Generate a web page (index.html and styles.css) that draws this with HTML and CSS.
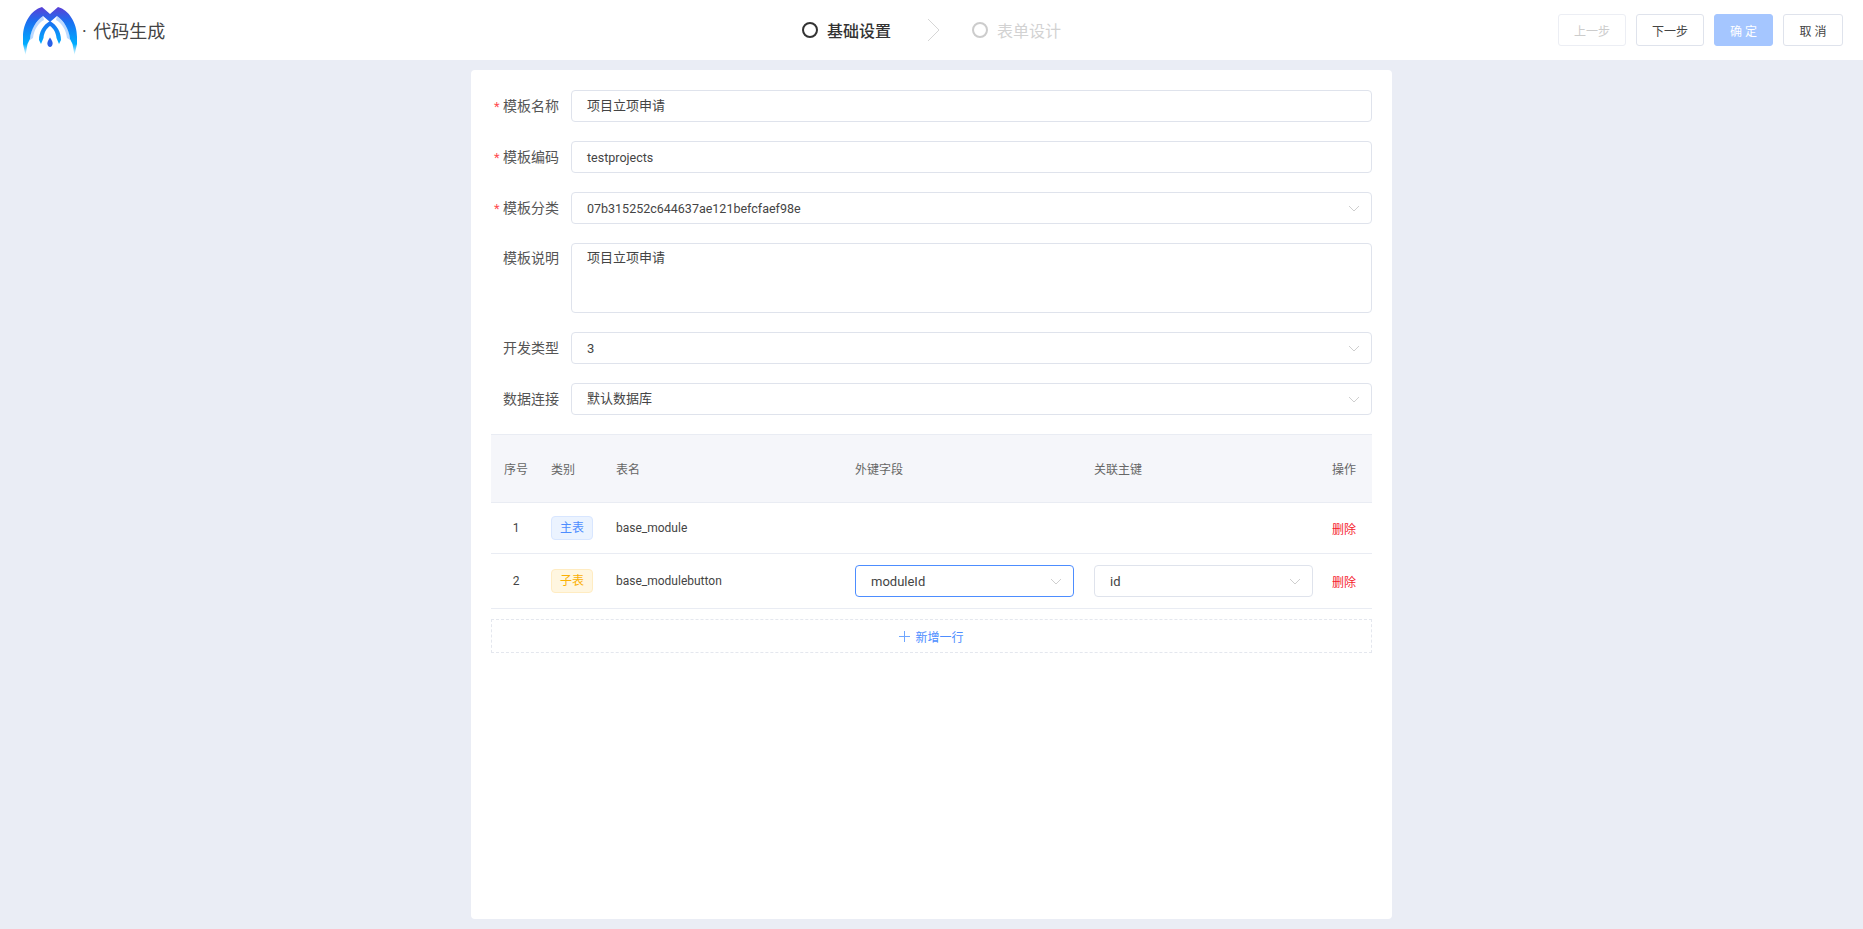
FILE: index.html
```html
<!DOCTYPE html>
<html lang="zh-CN">
<head>
    <meta charset="UTF-8">
    <title>代码生成</title>
    <link rel="stylesheet" href="styles.css">
</head>
<body>
    <!-- Top bar -->
    <header class="topbar">
        <div class="brand">
            <svg class="logo" viewBox="20 0 60 60" width="60" height="60">
                <defs>
                    <linearGradient id="logo-fill" gradientUnits="userSpaceOnUse" x1="0" y1="7" x2="0" y2="56">
                        <stop offset="0" stop-color="#5b3fd6"/>
                        <stop offset="0.3" stop-color="#1b6ff0"/>
                        <stop offset="0.76" stop-color="#00aeff"/>
                        <stop offset="0.88" stop-color="#8adcff"/>
                        <stop offset="1" stop-color="#ffffff"/>
                    </linearGradient>
                </defs>
                <path class="logo-halo" d="M43 16 C36 21 30 30 30 40 L33 38 C34 30 38 23 44 20 Z"/>
                <path class="logo-halo" d="M57 16 C64 21 70 30 70 40 L67 38 C66 30 62 23 56 20 Z"/>
                <path fill="url(#logo-fill)" d="M42 7 C31 10 23 23 23 37 V44 L25.500 55 L27.500 44 L30 39 C31 29 36 21 43 16 L50 22 L57 16 C64 21 69 29 70 39 L72.500 44 L74.500 55 L77 44 V37 C77 23 69 10 58 7 L50 14 Z"/>
                <path fill="url(#logo-fill)" d="M50 21 C43 25 39 32 39 40 L41 44 L43.500 38 C44 32 47 28 50 26 C53 28 56 32 56.500 38 L59 44 L61 40 C61 32 57 25 50 21 Z"/>
                <path fill="#2a5fe6" d="M50 37.500 C52 40.500 52.600 42 52.600 43.500 C52.600 45.500 51.400 47 50 47 C48.600 47 47.400 45.500 47.400 43.500 C47.400 42 48 40.500 50 37.500 Z"/>
            </svg>
            <span class="brand-title">· 代码生成</span>
        </div>

        <div class="steps">
            <div class="step step-active"><i class="step-dot"></i>基础设置</div>
            <svg class="step-arrow" viewBox="0 0 13 24" width="13" height="24">
                <path d="M1 1 L12 12 L1 23" fill="none" stroke="#d6d6d6"/>
            </svg>
            <div class="step"><i class="step-dot"></i>表单设计</div>
        </div>

        <div class="actions">
            <div class="btn btn-wide btn-disabled">上一步</div>
            <div class="btn btn-wide">下一步</div>
            <div class="btn btn-primary">确 定</div>
            <div class="btn">取 消</div>
        </div>
    </header>

    <main class="content">
        <div class="card">
            <div class="form-row">
                <label class="form-label"><span class="req">*</span>模板名称</label>
                <div class="field">项目立项申请</div>
            </div>
            <div class="form-row">
                <label class="form-label"><span class="req">*</span>模板编码</label>
                <div class="field field-latin field-small">testprojects</div>
            </div>
            <div class="form-row">
                <label class="form-label"><span class="req">*</span>模板分类</label>
                <div class="field field-select field-latin field-small">07b315252c644637ae121befcfaef98e<svg class="caret" viewBox="0 0 12 7" width="12" height="7"><path d="M1 1 L6 6 L11 1" fill="none" stroke="#cfcfcf"/></svg></div>
            </div>
            <div class="form-row">
                <label class="form-label label-top">模板说明</label>
                <div class="field field-area">项目立项申请</div>
            </div>
            <div class="form-row">
                <label class="form-label">开发类型</label>
                <div class="field field-select field-latin">3<svg class="caret" viewBox="0 0 12 7" width="12" height="7"><path d="M1 1 L6 6 L11 1" fill="none" stroke="#cfcfcf"/></svg></div>
            </div>
            <div class="form-row">
                <label class="form-label">数据连接</label>
                <div class="field field-select">默认数据库<svg class="caret" viewBox="0 0 12 7" width="12" height="7"><path d="M1 1 L6 6 L11 1" fill="none" stroke="#cfcfcf"/></svg></div>
            </div>

            <!-- Tables -->
            <table class="grid">
                <colgroup>
                    <col class="col-no">
                    <col class="col-type">
                    <col class="col-name">
                    <col class="col-key">
                    <col class="col-key">
                    <col class="col-op">
                </colgroup>
                <thead>
                    <tr>
                        <th class="center">序号</th>
                        <th>类别</th>
                        <th>表名</th>
                        <th>外键字段</th>
                        <th>关联主键</th>
                        <th class="cell-op">操作</th>
                    </tr>
                </thead>
                <tbody>
                    <tr class="row-main">
                        <td class="center">1</td>
                        <td><span class="tag tag-blue">主表</span></td>
                        <td>base_module</td>
                        <td></td>
                        <td></td>
                        <td class="cell-op"><span class="link-del">删除</span></td>
                    </tr>
                    <tr>
                        <td class="center">2</td>
                        <td><span class="tag tag-gold">子表</span></td>
                        <td>base_modulebutton</td>
                        <td><div class="field field-select field-latin field-focus">moduleId<svg class="caret" viewBox="0 0 12 7" width="12" height="7"><path d="M1 1 L6 6 L11 1" fill="none" stroke="#cfcfcf"/></svg></div></td>
                        <td><div class="field field-select field-latin">id<svg class="caret" viewBox="0 0 12 7" width="12" height="7"><path d="M1 1 L6 6 L11 1" fill="none" stroke="#cfcfcf"/></svg></div></td>
                        <td class="cell-op"><span class="link-del">删除</span></td>
                    </tr>
                </tbody>
            </table>

            <div class="add-row">
                <svg viewBox="0 0 11 11" width="11" height="11"><path d="M5.500 0 V11 M0 5.500 H11" stroke="#6ea6ff" fill="none"/></svg>
                新增一行
            </div>
        </div>
    </main>
</body>
</html>
```

FILE: styles.css
```css
/* General */
html, body {
    height: 100%;
}

body {
    margin: 0;
    display: flex;
    flex-direction: column;
    background-color: #eaedf5;
    color: #444;
    font-family: Roboto, "Noto Sans CJK SC", sans-serif;
    font-size: 13px;
}

/* Top bar */
.topbar {
    height: 60px;
    flex: none;
    display: flex;
    align-items: center;
    justify-content: space-between;
    padding: 0 20px;
    background-color: #fff;
    position: relative;
}

.brand {
    display: flex;
    align-items: center;
}

.logo {
    display: block;
}

.logo-halo {
    fill: #bcd9ff;
}

.brand-title {
    margin-left: 2px;
    font-size: 18px;
    word-spacing: 2px;
    color: #444;
}

.steps {
    position: absolute;
    left: 802px;
    top: 0;
    height: 60px;
    display: flex;
    align-items: center;
}

.step {
    display: flex;
    align-items: center;
    font-size: 16px;
    color: #d2d2d2;
}

.step-active {
    color: #333;
    font-weight: 500;
}

.step-dot {
    width: 16px;
    height: 16px;
    box-sizing: border-box;
    margin-right: 9px;
    border: 2px solid #ccc;
    border-radius: 50%;
}

.step-active .step-dot {
    border-color: #333;
}

.step-arrow {
    margin: 0 32px 0 36px;
}

.actions {
    display: flex;
    gap: 10px;
}

.btn {
    width: 60px;
    height: 32px;
    box-sizing: border-box;
    display: flex;
    align-items: center;
    justify-content: center;
    border: 1px solid #dfe3ec;
    border-radius: 3px;
    background-color: #fff;
    color: #444;
    font-size: 12px;
}

.btn-wide {
    width: 68px;
}

.btn-disabled {
    border-color: #eceef4;
    color: #ccc;
}

.btn-primary {
    width: 59px;
    border-color: #a5c6ff;
    background-color: #a5c6ff;
    color: #fff;
}

/* Card */
.content {
    flex: 1;
    min-height: 0;
    padding: 10px 0;
}

.card {
    width: 921px;
    height: 100%;
    box-sizing: border-box;
    margin: 0 auto;
    padding: 20px 20px 0;
    border-radius: 4px;
    background-color: #fff;
}

/* Form */
.form-row {
    display: flex;
    margin-bottom: 19px;
}

.form-label {
    width: 80px;
    height: 32px;
    flex: none;
    box-sizing: border-box;
    padding-right: 12px;
    line-height: 32px;
    text-align: right;
    font-size: 14px;
    color: #555;
}

.label-top {
    line-height: 30px;
}

.req {
    display: inline-block;
    width: 9px;
    line-height: 1;
    text-align: left;
    font-size: 13px;
    color: #ff4d4f;
}

.field {
    flex: 1;
    height: 32px;
    box-sizing: border-box;
    position: relative;
    padding: 0 15px;
    border: 1px solid #dfe3ec;
    border-radius: 4px;
    background-color: #fff;
    line-height: 30px;
    font-size: 13px;
    color: #444;
}

.field-latin {
    line-height: 32px;
}

.field-small {
    font-size: 12.5px;
}

.field-area {
    height: 70px;
    line-height: 28px;
}

.field-focus {
    border-color: #4d8dff;
}

.caret {
    position: absolute;
    right: 11px;
    top: 12px;
}

/* Table */
.grid {
    width: 881px;
    border-collapse: collapse;
    table-layout: fixed;
    font-size: 12px;
}

.col-no {
    width: 50px;
}

.col-type {
    width: 65px;
}

.col-name {
    width: 239px;
}

.col-key {
    width: 239px;
}

.col-op {
    width: 49px;
}

.grid th {
    height: 67px;
    padding: 0 10px;
    border-top: 1px solid #e9ecf3;
    border-bottom: 1px solid #e9ecf3;
    background-color: #f5f6fa;
    text-align: left;
    font-weight: 400;
    color: #666;
}

.grid td {
    padding: 11px 10px;
    border-bottom: 1px solid #e9ecf3;
    color: #444;
}

.grid .center {
    padding-left: 0;
    padding-right: 0;
    text-align: center;
}

.grid .cell-op {
    padding-left: 9px;
    padding-right: 0;
}

.grid .row-main td {
    height: 28px;
}

.grid td .field {
    flex: none;
}

.tag {
    display: inline-block;
    width: 42px;
    height: 24px;
    box-sizing: border-box;
    border: 1px solid;
    border-radius: 4px;
    line-height: 22px;
    text-align: center;
    vertical-align: middle;
}

.tag-blue {
    border-color: #d8e6ff;
    background-color: #ebf3ff;
    color: #4d8dff;
}

.tag-gold {
    border-color: #ffecc2;
    background-color: #fff6e0;
    color: #fab005;
}

.link-del {
    color: #f5222d;
}

.add-row {
    width: 881px;
    height: 34px;
    box-sizing: border-box;
    display: flex;
    align-items: center;
    justify-content: center;
    gap: 5px;
    margin-top: 10px;
    border: 1px dashed #e4e7ee;
    font-size: 12px;
    color: #4d8dff;
}
```
